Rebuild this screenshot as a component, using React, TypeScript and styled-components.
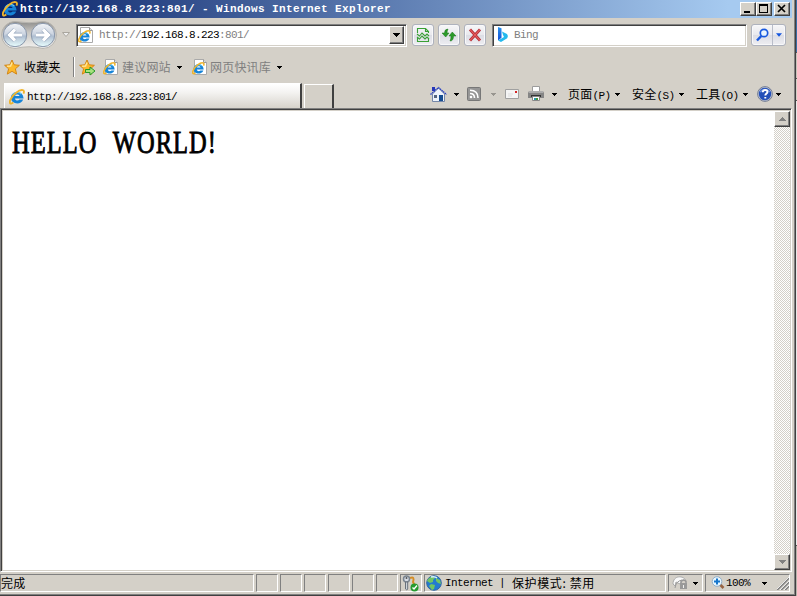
import React from 'react';
import styled, { createGlobalStyle, css } from 'styled-components';

const face = '#d4d0c8';

const Global = createGlobalStyle`
  * { box-sizing: border-box; }
  body { margin: 0; background: ${face}; overflow: hidden; }
`;

const Desktop = styled.div`
  width: 797px;
  height: 596px;
  display: grid;
  grid-template-columns: 796px 1px;
  background: ${face};
`;
const Backdrop = styled.div`
  background: linear-gradient(#3a6ea5 0 52px, #555 52px 53px, #c8c4bc 53px 78px, #555 78px 79px, #d4d0c8 79px 100px, #555 100px 101px, #e8e8e8 101px 545px, #555 545px 546px, #b8b4ac 546px);
`;
const Frame = styled.div`
  display: grid;
  grid-template-rows: 18px 36px 26px 28px 464px 22px;
  grid-template-columns: 792px;
  height: 596px;
  border-right: 1px solid #404040;
  border-bottom: 1px solid #404040;
  box-shadow: inset -1px -1px 0 #808080;
  background: ${face};
  font-family: 'Liberation Mono', monospace;
  font-size: 11px;
  letter-spacing: -0.6px;
  color: #000;
  white-space: pre;
`;

const TitleBar = styled.header`
  display: flex;
  align-items: center;
  padding: 0 2px 0 2px;
  background: linear-gradient(90deg, #0a246a, #a6caf0 92%);
  color: #fff;
  font-weight: bold;
  letter-spacing: 0.4px;
  > svg { flex: none; margin-right: 2px; }
`;
const TitleText = styled.span`
  flex: 1;
  line-height: 18px;
`;
const raised = css`
  background: ${face};
  border: 1px solid;
  border-color: #fff #404040 #404040 #fff;
  box-shadow: inset -1px -1px 0 #808080;
`;
const CaptionButton = styled.button<{ $gap?: number }>`
  ${raised}
  width: 16px;
  height: 14px;
  padding: 0;
  margin-left: ${p => p.$gap ?? 0}px;
  display: grid;
  place-items: center;
`;

const NavBar = styled.div`
  display: grid;
  grid-template-columns: 58px 16px 2px 331px 5px 80px 255px 4px 36px;
  align-items: center;
  padding-bottom: 2px;
`;
const Center = styled.div`
  display: grid;
  place-items: center;
`;
const Field = styled.div`
  display: flex;
  align-items: center;
  height: 23px;
  background: #fff;
  border: 1px solid;
  border-color: #808080 #fff #fff #808080;
  box-shadow: inset 1px 1px 0 #404040, inset -1px -1px 0 ${face};
  padding: 0 2px 0 1px;
  > svg { flex: none; }
`;
const FieldText = styled.span`
  flex: 1;
  margin-left: 5px;
  color: #808080;
  line-height: 18px;
  b { font-weight: normal; color: #000; }
`;
const ComboButton = styled.button`
  ${raised}
  width: 15px;
  height: 18px;
  padding: 0;
  display: grid;
  place-items: center;
`;
const CommandGroup = styled.div`
  display: flex;
  gap: 4px;
`;
const SoftButton = styled.button`
  width: 22px;
  height: 22px;
  padding: 0;
  display: grid;
  place-items: center;
  border: 1px solid #aeb2bd;
  border-radius: 3px;
  background: linear-gradient(#f6f6f8, #e9e9ee 50%, #dcdde5 51%, #eeeef2);
  box-shadow: inset 0 0 0 1px #f8f8fa;
`;
const SplitButton = styled(SoftButton)`
  width: 35px;
  grid-template-columns: 20px 13px;
  > svg:last-child { border-left: 1px solid #b9bdc9; width: 13px; height: 20px; padding: 7px 3px; }
`;

const LinksBar = styled.div`
  display: grid;
  grid-template-columns: 24px 49px 6px 24px 19px 54px 16px 18px 66px 10px;
  align-items: center;
  > svg { display: block; }
  > svg:first-child { margin-left: 4px; }
`;
const Zh = styled.span<{ $muted?: boolean; $spacing?: number }>`
  font-family: 'Noto Sans CJK SC', sans-serif;
  font-size: 12px;
  letter-spacing: ${p => p.$spacing ?? 0.2}px;
  line-height: 16px;
  color: ${p => (p.$muted ? '#808080' : '#000')};
`;
const Divider = styled.i`
  width: 2px;
  height: 20px;
  border-left: 1px solid #808080;
  border-right: 1px solid #fff;
`;

const TabBar = styled.div`
  display: grid;
  grid-template-columns: 298px 2px 30px 96px 23px 14px 23px 15px 23px 16px 7px 17px 46px 18px 46px 18px 46px 15px 18px 8px;
  padding-left: 4px;
  align-items: center;
`;
const Tab = styled.div`
  height: 25px;
  align-self: end;
  display: flex;
  align-items: center;
  border: 1px solid #fff;
  border-right: 2px solid #404040;
  border-bottom: 0;
  background: linear-gradient(#fff, #f4f3f1 35%, #d7d3cb);
  padding: 2px 0 0 4px;
  > svg { margin-right: 2px; }
`;
const NewTab = styled.div`
  height: 24px;
  align-self: end;
  border: 1px solid #fff;
  border-right: 2px solid #404040;
  border-bottom: 0;
`;

const Viewport = styled.main`
  display: grid;
  grid-template-columns: 1fr 16px;
  border: 1px solid;
  border-color: #808080 #fff #fff #808080;
  box-shadow: inset 1px 1px 0 #404040, inset -1px -1px 0 ${face};
  padding: 2px 1px 1px 2px;
`;
const Document = styled.div`
  background: #fff;
  padding: 13px 0 0 9px;
  overflow: hidden;
`;
const Heading = styled.h1`
  margin: 0;
  width: max-content;
  font: normal 32px/36px 'Liberation Serif', serif;
  -webkit-text-stroke: 0.9px #000;
  letter-spacing: 1.4px;
  word-spacing: 11px;
  transform: scaleX(0.765);
  transform-origin: 0 0;
`;
const ScrollTrack = styled.div`
  display: flex;
  flex-direction: column;
  justify-content: space-between;
  background: repeating-conic-gradient(${face} 0 25%, #fff 0 50%) 0 0 / 2px 2px;
`;
const ScrollButton = styled.button`
  ${raised}
  width: 16px;
  height: 16px;
  padding: 0;
  display: grid;
  place-items: center;
`;

const StatusBar = styled.footer`
  display: grid;
  grid-template-columns: 254px repeat(5, 22px) 22px 22px 242px 35px 85px;
  column-gap: 2px;
  padding-top: 2px;
  height: 20px;
`;
const Pane = styled.div<{ $pad?: number }>`
  display: flex;
  align-items: center;
  height: 18px;
  border: 1px solid;
  border-color: #808080 #fff #fff #808080;
  padding-left: ${p => p.$pad ?? 0}px;
  min-width: 0;
  > svg { flex: none; }
`;
const PaneText = styled.span<{ $left?: number }>`
  margin-left: ${p => p.$left ?? 0}px;
`;
const PaneSpace = styled.i<{ $w?: number }>`
  flex: ${p => (p.$w ? `0 0 ${p.$w}px` : '1')};
`;

const Caret = ({ color = '#000', up = false }: { color?: string; up?: boolean }) => (
  <svg width="7" height="6" viewBox="0 0 7 6" shapeRendering="crispEdges">
    <path d={up ? 'M3 1h1v1h1v1h1v1h1v1H0V4h1V3h1V2h1z' : 'M1 2h5v1H5v1H4v1H3V4H2V3H1z'} fill={color} />
  </svg>
);

const IeMark = () => (
  <g>
    <path d="M14.600 9.400H6c.3 2.500 3.300 2.700 4.500 1.200h3.700C12 16.600 2 15.400 2 8.800c0-7.400 12-8.400 12.600.6zM6 7h4.600C10.300 4.900 6.500 4.800 6 7z" fill="#1684d8" />
    <path d="M3.300 7.500C4.500 3.200 9.500 2.200 12.300 5" fill="none" stroke="#62c9f5" strokeWidth="1.300" />
    <path d="M4.300 13.600c-3.300 2.400-4.400.2-2.600-3.500C3.800 5.500 10 .6 13.600 1.100c1.700.2 1.600 1.900.8 3.500" fill="none" stroke="#efb42c" strokeWidth="1.900" />
  </g>
);
const IeIcon = () => (
  <svg width="16" height="16" viewBox="0 0 16 16"><IeMark /></svg>
);
const IePage = () => (
  <svg width="16" height="16" viewBox="0 0 16 16">
    <path d="M2.500.5h9l3 3v12h-12z" fill="#fff" stroke="#aaa" />
    <path d="M11.500.5v3h3" fill="#ddd" stroke="#999" />
    <g transform="translate(0 3) scale(.8)"><IeMark /></g>
  </svg>
);
const Star = ({ add = false }: { add?: boolean }) => (
  <svg width="17" height="17" viewBox="0 0 17 17">
    <path d="M8 1l2.100 4.800 5.300.5-4 3.500 1.200 5.300L8 12.300l-4.700 2.800 1.300-5.300-4-3.500 5.200-.5z" fill="#fdb92b" stroke="#d38616" strokeLinejoin="round" />
    <path d="M8 3.500L6.600 7l-3.500.3" fill="none" stroke="#ffe79b" strokeWidth="1.400" />
    {add && <path d="M6.500 10.500h4.500V8l5 4-5 4v-2.500H6.500z" fill="#a7e27e" stroke="#27992a" />}
  </svg>
);
const BackForward = () => (
  <svg width="58" height="30" viewBox="0 0 58 30">
    <defs>
      <linearGradient id="orb" x2="0" y2="1">
        <stop offset="0" stopColor="#f2f4f7" /><stop offset=".45" stopColor="#cdd5e1" />
        <stop offset=".55" stopColor="#afbed1" /><stop offset="1" stopColor="#eaffff" />
      </linearGradient>
      <linearGradient id="cup" x2="0" y2="1">
        <stop offset="0" stopColor="#8d8d8b" /><stop offset=".4" stopColor="#c8c6c2" /><stop offset="1" stopColor="#f4f3f1" />
      </linearGradient>
    </defs>
    <path d="M15 1.500Q29 4 43 1.500a13.500 13.500 0 010 27Q29 25 15 28.500a13.500 13.500 0 010-27z" fill="url(#cup)" stroke="#b7b5b0" />
    {[15, 43].map(x => <circle key={x} cx={x} cy="15" r="11.700" fill="url(#orb)" stroke="#8896aa" />)}
    <g fill="none" stroke="#8fa1b9" strokeWidth="4.500"><path d="M22 15H10M15 9.500L9.500 15l5.500 5.500M36 15h12M43 9.500l5.500 5.500-5.500 5.500" /></g>
    <g fill="none" stroke="#fff" strokeWidth="3.200"><path d="M22 15H10M15 9.500L9.500 15l5.500 5.500M36 15h12M43 9.500l5.500 5.500-5.500 5.500" /></g>
  </svg>
);
const Compat = () => (
  <svg width="14" height="16" viewBox="0 0 14 16" fill="none" stroke="#39a035" strokeWidth="1.100">
    <path d="M1.500 6V1.500h8l3 3V6M9.500 1.500v3h3M1.500 11v3.500h11V11M1 7l2.500 2L6 6l3 3 2-2 2 2M1 10l2.500 2L6 9l3 3 2-2 2 2" />
  </svg>
);
const Refresh = () => (
  <svg width="16" height="14" viewBox="0 0 16 14" fill="#2c9b2b" stroke="#18751d" strokeWidth=".5">
    <path d="M7 1Q3.500 1 3.500 5H1l3.700 4L8 5H6q0-2 1-4zM9 13q3.500 0 3.500-5H15l-3.700-4L8 8h2q0 3-1 5z" />
  </svg>
);
const Stop = () => (
  <svg width="14" height="14" viewBox="0 0 14 14"><path d="M2 1.500l10 11M12 1.500l-10 11" stroke="#b5303a" strokeWidth="2.800" /><path d="M2 1.500l10 11M12 1.500l-10 11" stroke="#ee6260" strokeWidth="1.100" /></svg>
);
const Bing = () => (
  <svg width="12" height="16" viewBox="0 0 12 16">
    <defs><linearGradient id="bing" x2="0" y2="1"><stop stopColor="#2793ee" /><stop offset="1" stopColor="#154ed7" /></linearGradient></defs>
    <path d="M1 0l3.500 1.200v9.500L1 13.500z" fill="url(#bing)" />
    <path d="M5 4.500l5 2.500q1.800 2 .2 4.200L4 15l-3-1.500L7 10 6 8z" fill="#24b9ed" />
  </svg>
);
const Magnifier = () => (
  <svg width="15" height="15" viewBox="0 0 15 15" fill="none" stroke="#1959df"><circle cx="9" cy="5" r="3.700" fill="#e9f5ff" strokeWidth="1.700" /><path d="M6.300 8L2 12.500" strokeWidth="2.500" /></svg>
);
const Home = () => (
  <svg width="17" height="17" viewBox="0 0 17 17">
    <path d="M2.500 8v7.500h12V8L8.500 2z" fill="#eef3fb" stroke="#7587a8" />
    <path d="M2 1h3v4H2z" fill="#2636b9" />
    <path d="M.5 8.500l8-7 8 7" fill="none" stroke="#263fc0" strokeWidth="1.300" strokeDasharray="1.500 .6" />
    <path d="M4 9h3v3H4z" fill="#54647f" /><path d="M9 9h4v6H9z" fill="#164c91" />
  </svg>
);
const Feed = () => (
  <svg width="14" height="14" viewBox="0 0 14 14">
    <rect x=".5" y=".5" width="13" height="13" rx="1" fill="#969696" stroke="#777" />
    <path d="M3 6.500q4.500 0 4.500 4.500M3 3.200q8 0 8 7.800" fill="none" stroke="#fff" strokeWidth="1.600" /><circle cx="4" cy="10" r="1.300" fill="#fff" />
  </svg>
);
const Mail = () => (
  <svg width="15" height="12" viewBox="0 0 15 12"><path d="M.5 1.500h13v9H.5z" fill="#f4f4f4" stroke="#a0a0a0" /><path d="M10 3h2v2h-2z" fill="#d62525" /><path d="M3 6h5M3 8h4" stroke="#ddd" /></svg>
);
const Printer = () => (
  <svg width="17" height="16" viewBox="0 0 17 16">
    <path d="M4.500 5V.5h7V5" fill="#fff" stroke="#9c9c9c" /><path d="M1 5h14l1 2v5H0V7z" fill="#858585" />
    <path d="M1 6h14" stroke="#d4d4d4" /><path d="M3 9h10v2H3z" fill="#333" /><path d="M4.500 10.500h7v4h-7z" fill="#fff" stroke="#888" /><path d="M6 12h2v2H6z" fill="#279ab3" /><path d="M8 12h2v2H8z" fill="#4a9839" />
  </svg>
);
const Help = () => (
  <svg width="16" height="16" viewBox="0 0 16 16">
    <circle cx="8" cy="8" r="7.400" fill="#bdc4d6" stroke="#777f93" /><circle cx="8" cy="8" r="6.200" fill="#2450b8" />
    <path d="M3 6q5-5 10 0" fill="none" stroke="#6f92dc" strokeWidth="1.500" />
    <path d="M5.800 6.200c0-3 4.700-2.700 4.700-.2 0 1.500-2.200 1.600-2.200 3.500M8.300 11v1.600" fill="none" stroke="#fff" strokeWidth="1.900" />
  </svg>
);
const Keys = () => (
  <svg width="17" height="17" viewBox="0 0 17 17">
    <path d="M8 3q5-2 3 4l3 6" fill="none" stroke="#d58c23" strokeWidth="2" />
    <circle cx="4.500" cy="4" r="3" fill="#d6dce5" stroke="#7b8590" strokeWidth="1.500" /><path d="M3.500 7h2.200v7l-1 1-1.200-1z" fill="#ccd2d8" stroke="#69717c" /><circle cx="4.500" cy="3" r="1" fill="#555" />
    <circle cx="12.500" cy="12.500" r="4" fill="#279b30" /><path d="M10.500 12.500l1.500 1.500 3-3.500" fill="none" stroke="#fff" strokeWidth="1.400" />
  </svg>
);
const Globe = () => (
  <svg width="16" height="16" viewBox="0 0 16 16">
    <circle cx="8" cy="8" r="7.300" fill="#237bd0" stroke="#3166a1" />
    <path d="M2 4l4-3 3 2-2 2v2L4 8 1 6zM10 3l4 2 1 4-3-1-2-2zM5 9l4 1-1 4-2 1-3-4z" fill="#72c563" /><path d="M5 2q4-1 6 1" fill="none" stroke="#d7f3ff" strokeWidth="1.500" />
  </svg>
);
const PrivacyLock = () => (
  <svg width="17" height="16" viewBox="0 0 17 16">
    <path d="M1 9c0-9 11-9 13-3l-3-1-3 4-4-2-1 4z" fill="#fafafa" stroke="#aaa" /><path d="M3 13q1-7 7-8" fill="none" stroke="#999" />
    <path d="M9 8V6.500q2.500-3 5 0V8" fill="none" stroke="#969696" strokeWidth="1.500" /><path d="M8 8h7v6H8z" fill="#999" /><path d="M11 10h1v3h-1z" fill="#eee" />
  </svg>
);
const ZoomIcon = () => (
  <svg width="15" height="16" viewBox="0 0 15 16"><path d="M8.500 9l4 4" stroke="#986342" strokeWidth="2.700" /><circle cx="6" cy="6.500" r="4.800" fill="#e8f7ff" stroke="#91adc7" /><path d="M6 3.500v6M3 6.500h6" stroke="#1475cc" strokeWidth="2" /></svg>
);
const Grip = () => (
  <svg width="12" height="14" viewBox="0 0 12 14"><path d="M0 14L12 2M4 14l8-8M8 14l4-4" stroke="#808080" strokeWidth="1.800" /><path d="M-1 14L12 1M3 14l9-9M7 14l5-5" stroke="#fff" strokeWidth=".8" /></svg>
);

export default function App() {
  return (
    <>
      <Global />
      <Desktop>
        <Frame>
          <TitleBar>
            <IeIcon />
            <TitleText>http://192.168.8.223:801/ - Windows Internet Explorer</TitleText>
            <CaptionButton aria-label="Minimize"><svg width="12" height="10" shapeRendering="crispEdges"><path d="M2 7h6v2H2z" /></svg></CaptionButton>
            <CaptionButton aria-label="Maximize"><svg width="12" height="10" shapeRendering="crispEdges"><path d="M1 0h9v9H1zM2 2v6h7V2z" fillRule="evenodd" /></svg></CaptionButton>
            <CaptionButton $gap={2} aria-label="Close"><svg width="12" height="10"><path d="M2 1l7 7M9 1L2 8" stroke="#000" strokeWidth="1.700" /></svg></CaptionButton>
          </TitleBar>
          <NavBar>
            <Center><BackForward /></Center>
            <Center><svg width="9" height="6"><path d="M.5.500h7L4 4.500z" fill="#eee" stroke="#aaa69e" /></svg></Center>
            <i />
            <Field>
              <IePage />
              <FieldText>http://<b>192.168.8.223</b>:801/</FieldText>
              <ComboButton aria-label="Addresses"><svg width="7" height="4" shapeRendering="crispEdges"><path d="M0 0h7v1H6v1H5v1H4v1H3V3H2V2H1V1H0z" /></svg></ComboButton>
            </Field>
            <i />
            <CommandGroup>
              <SoftButton aria-label="Compatibility view"><Compat /></SoftButton>
              <SoftButton aria-label="Refresh"><Refresh /></SoftButton>
              <SoftButton aria-label="Stop"><Stop /></SoftButton>
            </CommandGroup>
            <Field><PaneSpace $w={3} /><Bing /><FieldText>Bing</FieldText></Field>
            <i />
            <SplitButton aria-label="Search"><Magnifier /><svg viewBox="0 0 7 6"><path d="M0 1h7L3.500 5z" fill="#1254df" /></svg></SplitButton>
          </NavBar>
          <LinksBar>
            <Star />
            <Zh>收藏夹</Zh>
            <Divider />
            <Star add />
            <IePage />
            <Zh $muted>建议网站</Zh>
            <Caret />
            <IePage />
            <Zh $muted>网页快讯库</Zh>
            <Caret />
          </LinksBar>
          <TabBar>
            <Tab><IeIcon />http://192.168.8.223:801/</Tab>
            <i />
            <NewTab />
            <i />
            <Home /><Caret />
            <Feed /><Caret color="#98958f" />
            <Mail /><Printer />
            <i /><Caret />
            <span><Zh>页面</Zh>(P)</span><Caret />
            <span><Zh>安全</Zh>(S)</span><Caret />
            <span><Zh>工具</Zh>(O)</span><Caret />
            <Help /><Caret />
          </TabBar>
          <Viewport>
            <Document><Heading>HELLO WORLD!</Heading></Document>
            <ScrollTrack>
              <ScrollButton aria-label="Scroll up"><Caret color="#808080" up /></ScrollButton>
              <ScrollButton aria-label="Scroll down"><svg width="7" height="4" shapeRendering="crispEdges"><path d="M0 0h7v1H6v1H5v1H4v1H3V3H2V2H1V1H0z" fill="#808080" /></svg></ScrollButton>
            </ScrollTrack>
          </Viewport>
          <StatusBar>
            <Pane><Zh>完成</Zh></Pane>
            <Pane /><Pane /><Pane /><Pane /><Pane /><Pane />
            <Pane $pad={1}><Keys /></Pane>
            <Pane $pad={1}><Globe /><PaneText $left={3}>Internet | </PaneText><PaneSpace $w={1} /><Zh $spacing={0.6}>保护模式: 禁用</Zh></Pane>
            <Pane $pad={3}><PrivacyLock /><PaneSpace /><Caret /><PaneSpace $w={3} /></Pane>
            <Pane $pad={5}><ZoomIcon /><PaneText>100%</PaneText><PaneSpace $w={11} /><Caret /><PaneSpace /><Grip /></Pane>
          </StatusBar>
        </Frame>
        <Backdrop />
      </Desktop>
    </>
  );
}
